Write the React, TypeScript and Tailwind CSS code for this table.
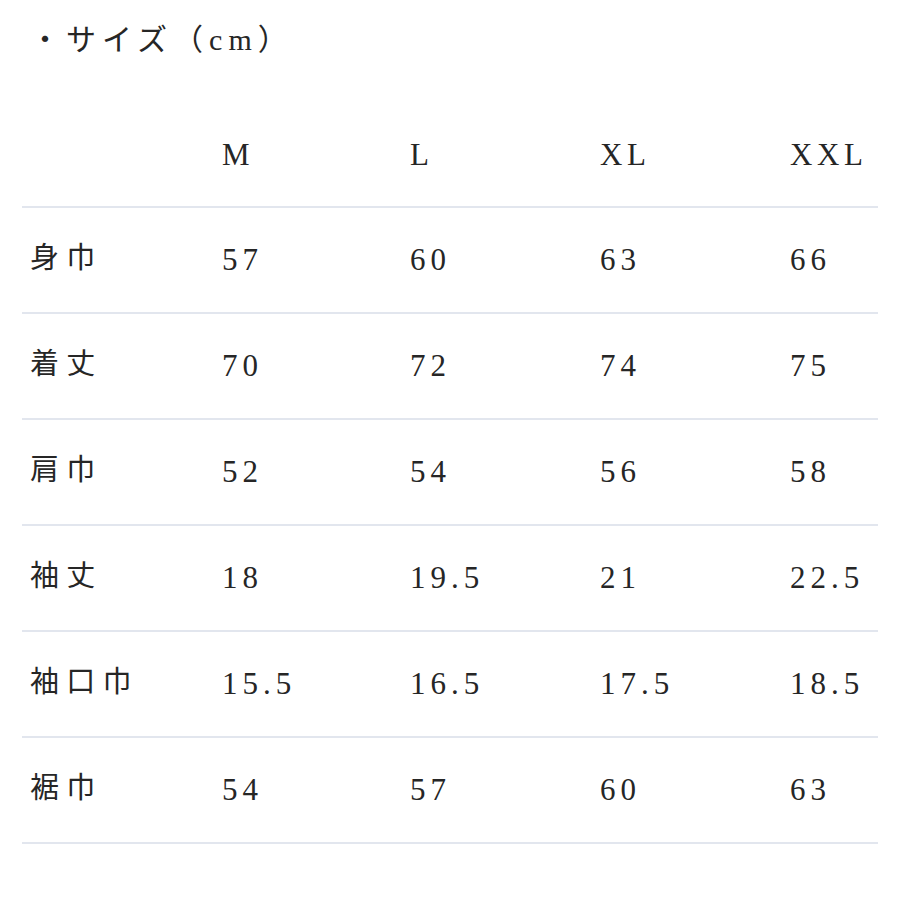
import React from "react";

const sizes = ["M", "L", "XL", "XXL"];

const rows: { label: string; values: string[] }[] = [
  { label: "身巾", values: ["57", "60", "63", "66"] },
  { label: "着丈", values: ["70", "72", "74", "75"] },
  { label: "肩巾", values: ["52", "54", "56", "58"] },
  { label: "袖丈", values: ["18", "19.5", "21", "22.5"] },
  { label: "袖口巾", values: ["15.5", "16.5", "17.5", "18.5"] },
  { label: "裾巾", values: ["54", "57", "60", "63"] },
];

const font = {
  fontFamily: '"Liberation Serif", "Noto Sans CJK JP", serif',
};

const App: React.FC = () => {
  return (
    <div
      className="w-[900px] h-[900px] bg-white text-[#262626] overflow-hidden"
      style={font}
    >
      {/* ---------------- TITLE ---------------- */}
      <div className="pt-[20px] pl-[30px] h-[101px] text-[30px] leading-[40px] tracking-[0.2em]">
        ・サイズ（cm）
      </div>

      {/* ---------------- TABLE ---------------- */}
      <div className="mx-[22px] w-[856px]">
        <div className="grid grid-cols-[200px_188px_190px_190px_88px] h-[105px] pt-[4px] items-center text-[31px] tracking-[0.15em]">
          <div />
          {sizes.map((s) => (
            <div key={s}>{s}</div>
          ))}
        </div>

        {rows.map((r) => (
          <div
            key={r.label}
            className="grid grid-cols-[200px_188px_190px_190px_88px] h-[106px] items-center border-t-2 border-[#e2e6ee] text-[31px] tracking-[0.16em]"
          >
            <div className="pl-[8px] pb-[2px] text-[29px] tracking-[0.25em]">{r.label}</div>
            {r.values.map((v, i) => (
              <div key={i} className="whitespace-nowrap">
                {v}
              </div>
            ))}
          </div>
        ))}
        <div className="border-t-2 border-[#e2e6ee]" />
      </div>
    </div>
  );
};

export default App;
